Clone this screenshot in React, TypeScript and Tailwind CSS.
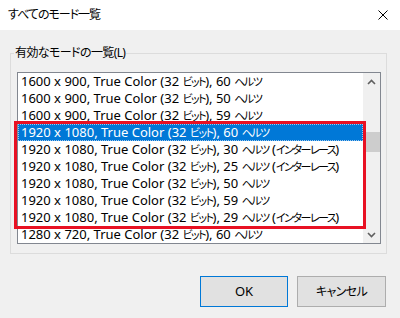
import React from 'react';

const modes: string[] = [
  '1600 x 900, True Color (32 ビット), 60 ヘルツ',
  '1600 x 900, True Color (32 ビット), 50 ヘルツ',
  '1600 x 900, True Color (32 ビット), 59 ヘルツ',
  '1920 x 1080, True Color (32 ビット), 60 ヘルツ',
  '1920 x 1080, True Color (32 ビット), 30 ヘルツ (インターレース)',
  '1920 x 1080, True Color (32 ビット), 25 ヘルツ (インターレース)',
  '1920 x 1080, True Color (32 ビット), 50 ヘルツ',
  '1920 x 1080, True Color (32 ビット), 59 ヘルツ',
  '1920 x 1080, True Color (32 ビット), 29 ヘルツ (インターレース)',
  '1280 x 720, True Color (32 ビット), 60 ヘルツ',
];

const SELECTED = 3;

// katakana runs are set narrower, like Yu Gothic UI
const Mixed: React.FC<{ text: string }> = ({ text }) => (
  <>
    {text.split(/([\u3040-\u30ff\u4e00-\u9fff]+)/).map((part, i) =>
      i % 2 === 1 ? (
        <span key={i} className="text-[11px] tracking-[-1.5px]">
          {part}
        </span>
      ) : (
        <span key={i}>{part}</span>
      )
    )}
  </>
);

const Chevron: React.FC<{ up?: boolean }> = ({ up }) => (
  <svg width="9" height="6" viewBox="0 0 9 6" className={up ? '' : 'rotate-180'}>
    <path d="M1 5 L4.5 1.5 L8 5" fill="none" stroke="#606060" strokeWidth="1.6" />
  </svg>
);

const App: React.FC = () => {
  return (
    <div className="w-[400px] h-[318px] bg-[#f0f0f0] flex flex-col text-[12px] text-black font-['Noto_Sans','Noto_Sans_CJK_JP',sans-serif] [font-feature-settings:'palt'] overflow-hidden">
      {/* title bar */}
      <div className="h-[30px] bg-white flex items-center justify-between pl-[8px] pr-[12px] shrink-0">
        <span className="leading-none tracking-[-1px]">すべてのモード一覧</span>
        <svg width="10" height="10" viewBox="0 0 10 10">
          <path d="M0.5 0.5 L9.5 9.5 M9.5 0.5 L0.5 9.5" stroke="#000" strokeWidth="1" />
        </svg>
      </div>

      {/* group box */}
      <div className="relative ml-[10px] mt-[23px] w-[377px] h-[201px] border border-[#dcdcdc] pl-[6px] pt-[18px]">
        <span className="absolute left-[3px] top-[-9px] px-[1px] bg-[#f0f0f0] leading-[16px] tracking-[-0.6px]">
          有効なモードの一覧(L)
        </span>

        {/* list box */}
        <div className="relative w-[364px] h-[172px] border border-[#828790] bg-white flex text-[13px]">
          <div className="flex-1 flex flex-col">
            {modes.map((mode, i) => (
              <div
                key={i}
                className={
                  i === SELECTED
                    ? 'h-[17px] leading-[17px] pl-[3px] whitespace-nowrap bg-[#0078d7] text-white outline-1 outline-dotted outline-[#9cc6ee] -outline-offset-1'
                    : 'h-[17px] leading-[17px] pl-[3px] whitespace-nowrap'
                }
              >
                <Mixed text={mode} />
              </div>
            ))}
          </div>

          {/* scrollbar */}
          <div className="w-[17px] bg-[#f0f0f0] flex flex-col items-center">
            <div className="h-[17px] flex items-center justify-center">
              <Chevron up />
            </div>
            <div className="mt-[42px] w-[17px] h-[20px] bg-[#cdcdcd]" />
            <div className="flex-1" />
            <div className="h-[17px] flex items-center justify-center">
              <Chevron />
            </div>
          </div>

          {/* red highlight */}
          <div className="absolute left-[-4px] top-[48px] w-[352px] h-[108px] border-[3px] border-[#e81123]" />
        </div>
      </div>

      {/* buttons */}
      <div className="flex justify-end gap-[9px] mt-[22px] pr-[14px]">
        <button className="w-[88px] h-[31px] bg-[#e1e1e1] border border-[#0078d7] leading-none text-[13px]">OK</button>
        <button className="w-[89px] h-[31px] bg-[#e1e1e1] border border-[#adadad] leading-none tracking-[-0.6px]">キャンセル</button>
      </div>
    </div>
  );
};

export default App;
